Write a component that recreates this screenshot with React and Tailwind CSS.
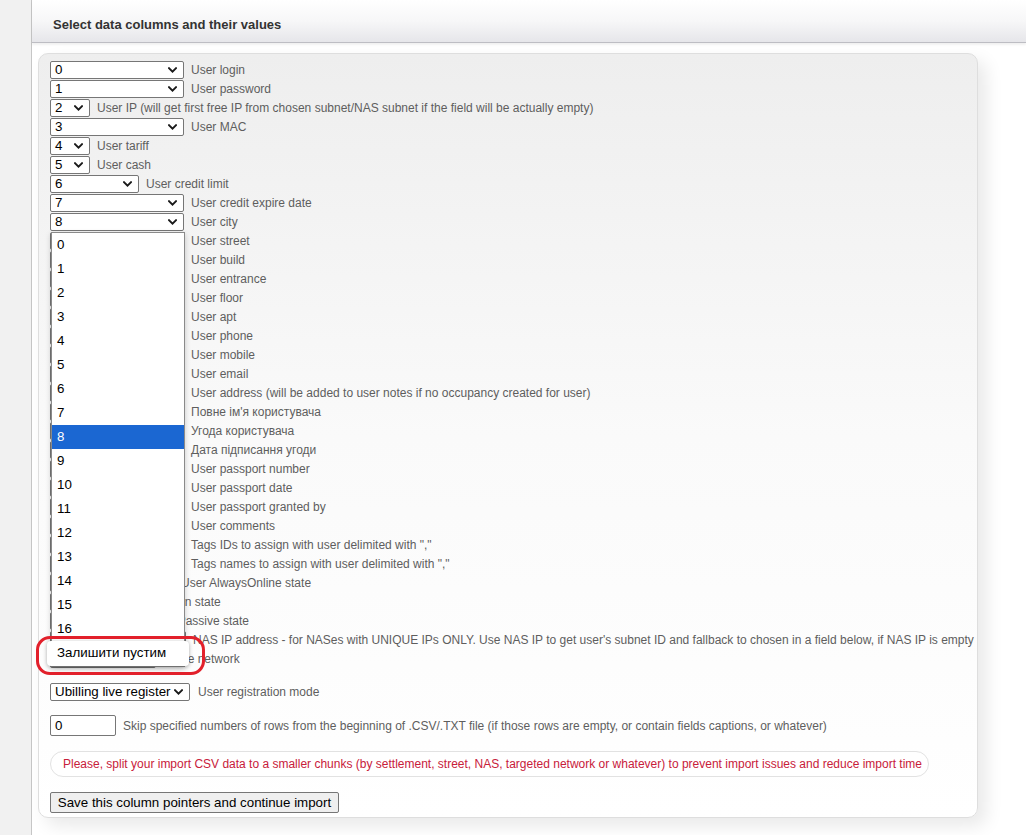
import React from "react";

const rows = [
  { v: "0", w: "w-[134px]", label: "User login" },
  { v: "1", w: "w-[134px]", label: "User password" },
  { v: "2", w: "w-[40px]", label: "User IP (will get first free IP from chosen subnet/NAS subnet if the field will be actually empty)" },
  { v: "3", w: "w-[134px]", label: "User MAC" },
  { v: "4", w: "w-[40px]", label: "User tariff" },
  { v: "5", w: "w-[40px]", label: "User cash" },
  { v: "6", w: "w-[89px]", label: "User credit limit" },
  { v: "7", w: "w-[134px]", label: "User credit expire date" },
  { v: "8", w: "w-[134px]", label: "User city", open: true },
  { v: "9", w: "w-[134px]", label: "User street" },
  { v: "10", w: "w-[134px]", label: "User build" },
  { v: "11", w: "w-[134px]", label: "User entrance" },
  { v: "12", w: "w-[134px]", label: "User floor" },
  { v: "13", w: "w-[134px]", label: "User apt" },
  { v: "14", w: "w-[134px]", label: "User phone" },
  { v: "15", w: "w-[134px]", label: "User mobile" },
  { v: "16", w: "w-[134px]", label: "User email" },
  { v: "17", w: "w-[134px]", label: "User address (will be added to user notes if no occupancy created for user)" },
  { v: "18", w: "w-[134px]", label: "Повне ім'я користувача" },
  { v: "19", w: "w-[134px]", label: "Угода користувача" },
  { v: "20", w: "w-[134px]", label: "Дата підписання угоди" },
  { v: "21", w: "w-[134px]", label: "User passport number" },
  { v: "22", w: "w-[134px]", label: "User passport date" },
  { v: "23", w: "w-[134px]", label: "User passport granted by" },
  { v: "24", w: "w-[134px]", label: "User comments" },
  { v: "25", w: "w-[134px]", label: 'Tags IDs to assign with user delimited with ","' },
  { v: "26", w: "w-[134px]", label: 'Tags names to assign with user delimited with ","' },
  { v: "0", w: "w-[124px]", label: "User AlwaysOnline state" },
  { v: "0", w: "w-[75px]", label: "User Down state" },
  { v: "0", w: "w-[92px]", label: "User Passive state" },
  { v: "0", w: "w-[136px]", label: "NAS IP address - for NASes with UNIQUE IPs ONLY. Use NAS IP to get user's subnet ID and fallback to chosen in a field below, if NAS IP is empty" },
  { v: "1", w: "w-[106px]", label: "Same network" },
];

const options = ["0", "1", "2", "3", "4", "5", "6", "7", "8", "9", "10", "11", "12", "13", "14", "15", "16"];

function Chevron() {
  return (
    <svg width="9" height="6" viewBox="0 0 9 6" className="absolute right-[6px] top-1/2 -translate-y-1/2">
      <path d="M1 1.2 L4.5 4.6 L8 1.2" fill="none" stroke="#1a1a1a" strokeWidth="1.9" strokeLinecap="square" />
    </svg>
  );
}

function Popup() {
  return (
    <div className="absolute left-0 top-[18px] w-[134px] bg-white border border-[#8a8a8a] shadow-[0_2px_6px_rgba(0,0,0,0.2)] z-10">
      {options.map((o) => (
        <div
          key={o}
          className={
            o === "8"
              ? "h-[24px] flex items-center pl-[5px] text-[13.33px] bg-[#1b67d2] text-white"
              : "h-[24px] flex items-center pl-[5px] text-[13.33px] text-black"
          }
        >
          {o}
        </div>
      ))}
      <div className="relative -mx-[5px] h-[25px] flex items-center pl-[10px] text-[13.33px] text-black bg-white rounded-[4px] shadow-[0_1px_4px_rgba(0,0,0,0.3)]">
        Залишити пустим
      </div>
      <div className="absolute left-[-16px] top-[403px] w-[169px] h-[39px] border-[3px] border-[#e2202b] rounded-[14px] z-20" />
    </div>
  );
}

function Select({ value, w, open }) {
  return (
    <div className={`relative shrink-0 h-[18px] ${w} border border-[#767676] rounded-[2px] bg-white flex items-center pl-[4px] text-[13.33px] text-black`}>
      <span className="leading-none">{value}</span>
      <Chevron />
      {open && <Popup />}
    </div>
  );
}

export default function App() {
  return (
    <div className="flex w-[1026px] h-[835px] overflow-hidden bg-white font-['Liberation_Sans',Arial,sans-serif]">
      <div className="w-[32px] shrink-0 bg-[#f1f1f1] border-r border-[#c6c6c6]" />
      <div className="flex-1 flex flex-col min-w-0">
        <div className="h-[43px] shrink-0 bg-linear-to-b from-white via-[#f7f7f8] to-[#e6e6ea] border-b border-[#bdbdc3] flex items-center pl-[21px] pt-[8px] shadow-[0_2px_2px_rgba(0,0,0,0.06)]">
          <span className="text-[13px] font-bold text-[#333]">Select data columns and their values</span>
        </div>
        <div className="pl-[6px] pt-[10px]">
          <div className="relative w-[940px] h-[765px] rounded-[10px] border border-[#dedede] bg-linear-to-b from-[#eeeeee] via-[#fafafa] to-white shadow-[8px_8px_18px_rgba(0,0,0,0.09)] pt-[6px] pl-[11px]">
            <div className="flex flex-col">
              {rows.map((r, i) => (
                <div key={i} className="h-[19px] flex items-center">
                  <Select value={r.v} w={r.w} open={r.open} />
                  <span className="ml-[7px] text-[12px] text-[#5e5e5e] whitespace-nowrap">{r.label}</span>
                </div>
              ))}
            </div>
            <div className="mt-[14px] h-[19px] flex items-center">
              <Select value="Ubilling live register" w="w-[140px]" />
              <span className="ml-[8px] text-[12px] text-[#5e5e5e]">User registration mode</span>
            </div>
            <div className="mt-[14px] flex items-center">
              <div className="w-[66px] h-[21px] border border-[#767676] rounded-[2px] bg-white flex items-center pl-[4px] text-[13.33px] text-black">0</div>
              <span className="ml-[7px] text-[12px] text-[#5e5e5e] whitespace-nowrap">
                Skip specified numbers of rows from the beginning of .CSV/.TXT file (if those rows are empty, or contain fields captions, or whatever)
              </span>
            </div>
            <div className="mt-[15px] w-[879px] h-[26px] rounded-[13px] border border-[#e2e2e2] bg-white flex items-center pl-[12px] text-[12px] text-[#c8203a] whitespace-nowrap">
              Please, split your import CSV data to a smaller chunks (by settlement, street, NAS, targeted network or whatever) to prevent import issues and reduce import time
            </div>
            <button className="mt-[15px] h-[21px] w-[289px] border border-[#767676] rounded-[2px] bg-[#efefef] text-[13.33px] text-black flex items-center justify-center">
              Save this column pointers and continue import
            </button>
          </div>
        </div>
      </div>
    </div>
  );
}
